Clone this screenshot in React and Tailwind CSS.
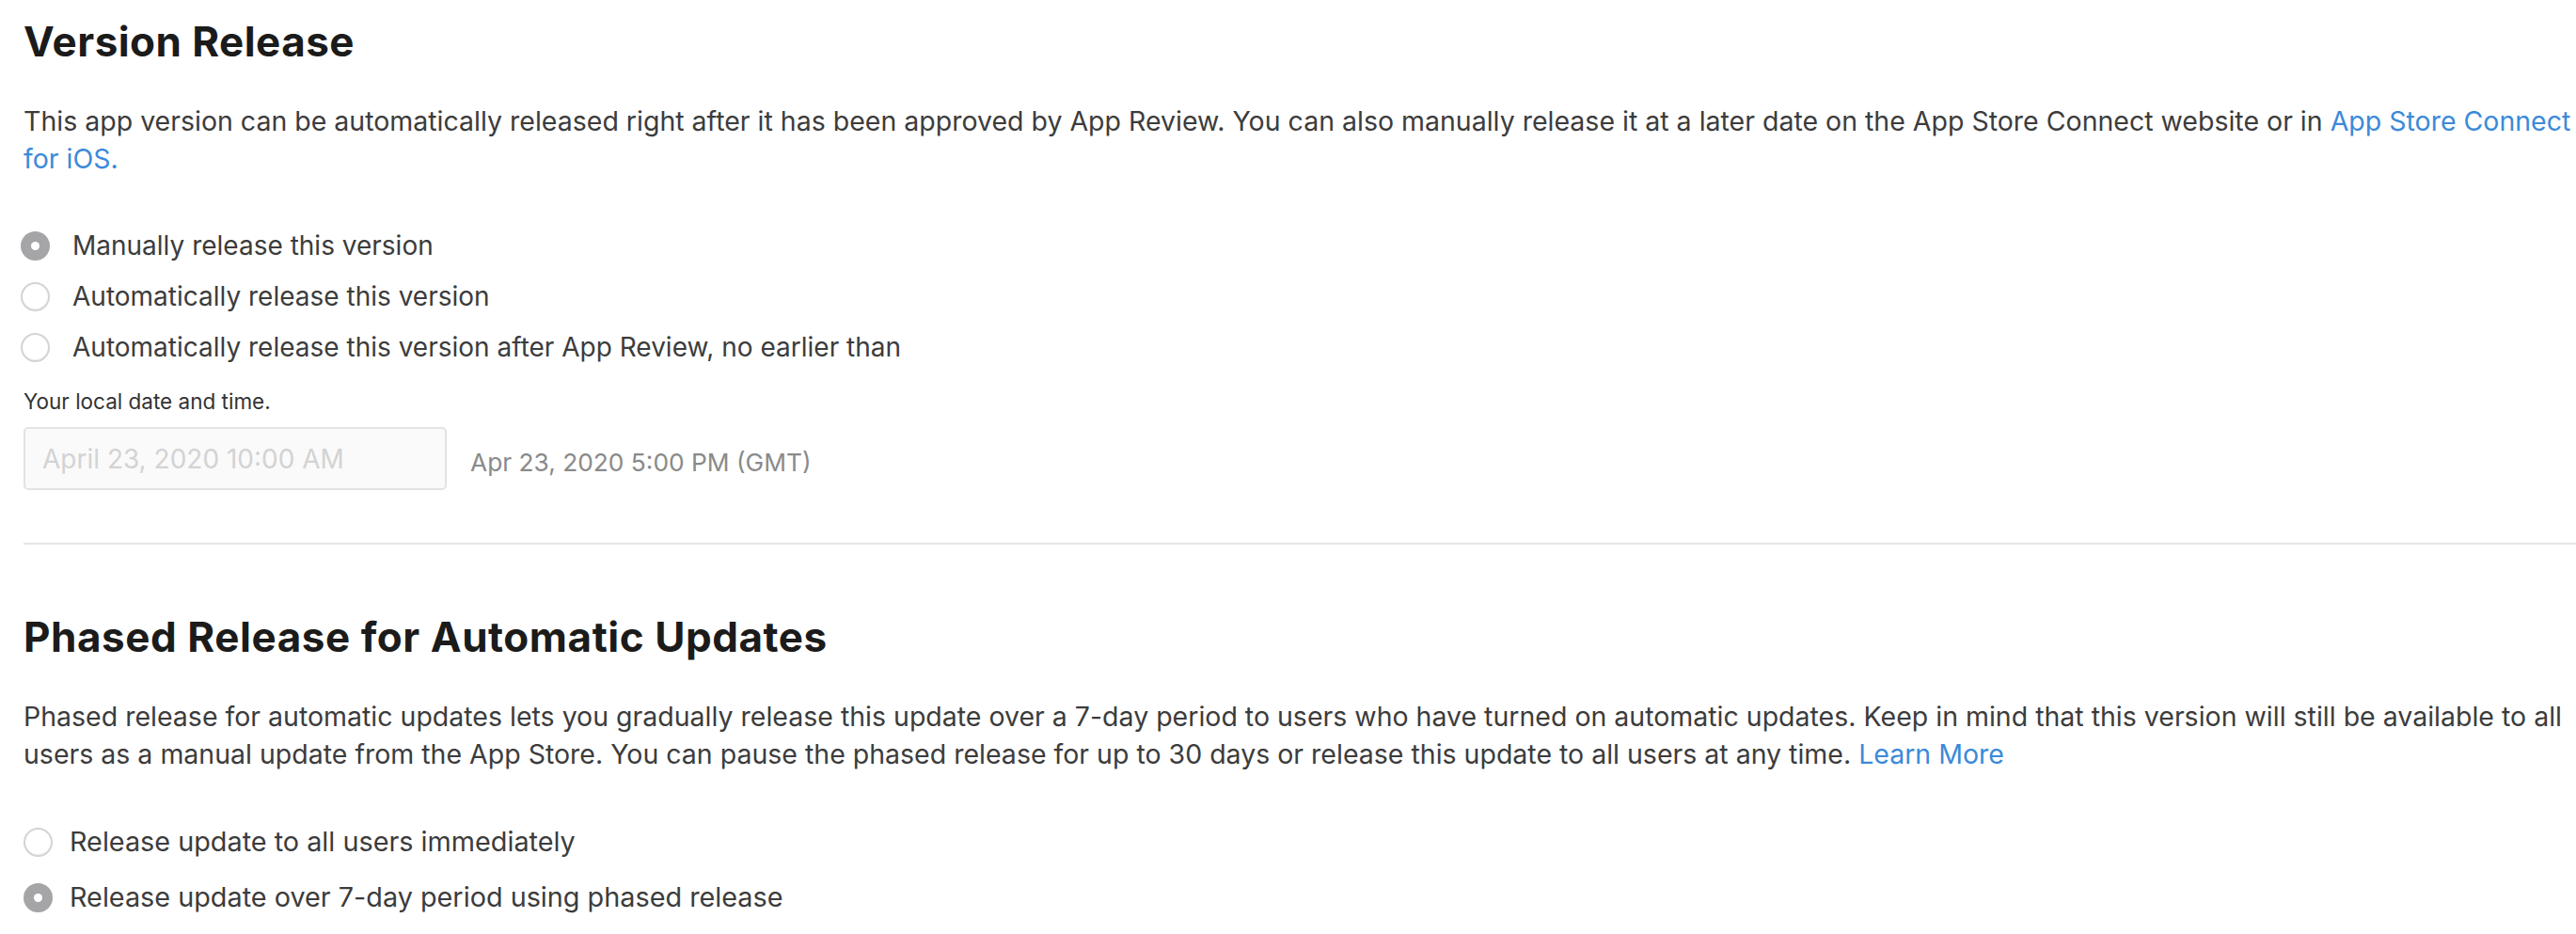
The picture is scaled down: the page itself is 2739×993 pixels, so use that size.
import React from "react";

function Radio({ checked }) {
  return checked ? (
    <span className="flex h-[31px] w-[31px] shrink-0 items-center justify-center rounded-full bg-[#a5a5a7]">
      <span className="h-[9px] w-[9px] rounded-full bg-white" />
    </span>
  ) : (
    <span className="h-[31px] w-[31px] shrink-0 rounded-full border-2 border-[#d4d4d4] bg-white shadow-[inset_0_-1px_1px_rgba(0,0,0,0.06)]" />
  );
}

function Option({ checked, children, cls, textCls = "text-[28px]" }) {
  return (
    <div className={`flex items-center ${cls}`}>
      <Radio checked={checked} />
      <span className={`${textCls} leading-none text-[#3c3c3c]`}>{children}</span>
    </div>
  );
}

export default function App() {
  return (
    <div
      className="min-h-[993px] w-full overflow-hidden bg-white pl-[25px] text-[#333]"
      style={{ fontFamily: "Inter, 'Noto Sans', sans-serif" }}
    >
      <section className="pt-[18px]">
        <h1 className="text-[44px] font-bold leading-[53px] tracking-[0.45px] text-[#1b1b1b]">Version Release</h1>
        <p className="mt-[38px] whitespace-nowrap text-[28.5px] leading-[40px] text-[#3c3c3c]">
          This app version can be automatically released right after it has been approved by App Review. You can also
          manually release it at a later date on the App Store Connect website or in{" "}
          <a className="text-[#3b8ad9]">
            App Store Connect
            <br />
            for iOS.
          </a>
        </p>
        <div className="mt-[45px] flex flex-col">
          <Option checked cls="h-[54px] gap-[24px] -ml-[3px]">
            Manually release this version
          </Option>
          <Option cls="h-[54px] gap-[24px] -ml-[3px]">Automatically release this version</Option>
          <Option cls="h-[54px] gap-[24px] -ml-[3px]">
            Automatically release this version after App Review, no earlier than
          </Option>
        </div>
        <div className="mt-[18px] text-[22.5px] leading-[26px] text-[#333]">Your local date and time.</div>
        <div className="mt-[14px] flex items-center gap-[25px]">
          <div className="flex h-[67px] w-[450px] items-center rounded-[5px] border-2 border-[#e3e3e3] bg-[#fafafa] px-[18px] text-[28px] text-[#d3d3d3]">
            April 23, 2020 10:00 AM
          </div>
          <span className="mt-[8px] text-[26.3px] text-[#8a8a8a]">Apr 23, 2020 5:00 PM (GMT)</span>
        </div>
      </section>

      <div className="mt-[56px] h-[2px] bg-[#e6e6e6]" />

      <section className="pt-[72px]">
        <h2 className="text-[44px] font-bold leading-[53px] tracking-[0.55px] text-[#1b1b1b]">
          Phased Release for Automatic Updates
        </h2>
        <p className="mt-[38px] whitespace-nowrap text-[28.5px] leading-[40px] text-[#3c3c3c]">
          Phased release for automatic updates lets you gradually release this update over a 7-day period to users who
          have turned on automatic updates. Keep in mind that this version will still be available to all
          <br />
          users as a manual update from the App Store. You can pause the phased release for up to 30 days or release
          this update to all users at any time. <a className="text-[#3b8ad9]">Learn More</a>
        </p>
        <div className="mt-[44px] flex flex-col">
          <Option cls="h-[59px] gap-[18px]" textCls="text-[28.8px]">
            Release update to all users immediately
          </Option>
          <Option checked cls="h-[59px] gap-[18px]" textCls="text-[28.8px]">
            Release update over 7-day period using phased release
          </Option>
        </div>
      </section>
    </div>
  );
}
